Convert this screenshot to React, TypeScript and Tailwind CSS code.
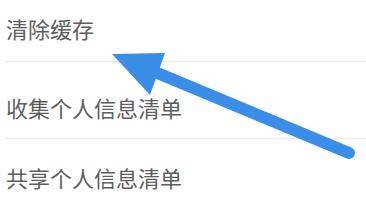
import React from 'react';

const rows = [
  { label: '清除缓存', pad: 'pt-[17px] pb-[22px] border-b' },
  { label: '收集个人信息清单', pad: 'pt-[34px] pb-[20px] border-b' },
  { label: '共享个人信息清单', pad: 'pt-[27px] pb-[20px]' },
];

function App() {
  return (
    <div className="relative w-[366px] h-[209px] overflow-hidden bg-white font-['Noto_Sans_CJK_SC',sans-serif]">
      <div className="pl-[6px]">
        {rows.map((row) => (
          <div key={row.label} className={`${row.pad} border-[#ececec]`}>
            <span className="block text-[22px] leading-[22px] text-[#5e5e5e]">{row.label}</span>
          </div>
        ))}
      </div>

      {/* annotation arrow */}
      <svg className="absolute left-0 top-0" width="366" height="209" viewBox="0 0 366 209">
        <line x1="155" y1="72" x2="349" y2="153" stroke="#3a8ee8" strokeWidth="12" strokeLinecap="round" />
        <polygon points="112,54 165,53 150,95" fill="#3a8ee8" />
      </svg>
    </div>
  );
}

export default App;
